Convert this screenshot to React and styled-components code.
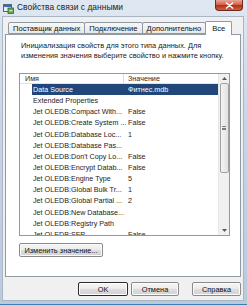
import React from "react";
import styled, { createGlobalStyle } from "styled-components";

const GlobalStyle = createGlobalStyle`
  html, body {
    margin: 0;
    padding: 0;
    background: #ffffff;
  }
  body {
    font-family: "Liberation Sans", Arial, sans-serif;
  }
`;

const Window = styled.div`
  width: 247px;
  height: 305px;
  box-sizing: border-box;
  display: flex;
  flex-direction: column;
  padding: 0 3px 3px 2px;
  background: linear-gradient(180deg, #dfe8f2 0%, #c8d6e6 40%, #b9cadd 100%);
  border-bottom: 1px solid #3b7fb8;
  overflow: hidden;
`;

const TitleBar = styled.div`
  height: 16px;
  display: flex;
  align-items: center;
  flex-shrink: 0;
`;

const TitleIcon = styled.svg`
  width: 11px;
  height: 11px;
  margin-left: 1px;
  margin-right: 3px;
`;

const TitleText = styled.div`
  font-size: 8.4px;
  color: #1a1a1a;
  letter-spacing: 0.05px;
  padding-bottom: 3px;
`;

const CloseButton = styled.div`
  margin-left: auto;
  margin-right: 1px;
  align-self: flex-start;
  width: 28px;
  height: 11px;
  border: 1px solid #6b2a22;
  border-top: none;
  border-radius: 0 0 4px 4px;
  background: linear-gradient(180deg, #e8a797 0%, #d5624b 45%, #b33118 55%, #d1613c 100%);
  display: flex;
  align-items: center;
  justify-content: center;
  box-sizing: border-box;
`;

const Client = styled.div`
  flex: 1;
  background: #f0f0f0;
  border: 1px solid #a9b6c4;
  display: flex;
  flex-direction: column;
  padding: 4px 2px 0 2px;
  box-sizing: border-box;
`;

const TabStrip = styled.div`
  display: flex;
  align-items: flex-end;
  height: 13px;
  padding-left: 3px;
  position: relative;
  z-index: 1;
`;

const Tab = styled.div`
  height: ${(p) => (p.$active ? "14px" : "12px")};
  box-sizing: border-box;
  padding: 0 ${(p) => (p.$active ? "6px" : "4px")};
  margin-bottom: ${(p) => (p.$active ? "-1px" : "0")};
  font-size: 7.6px;
  color: #111;
  display: flex;
  align-items: center;
  border: 1px solid #8e9aa6;
  border-bottom: ${(p) => (p.$active ? "none" : "1px solid #8e9aa6")};
  margin-right: -1px;
  background: ${(p) =>
    p.$active ? "#ffffff" : "linear-gradient(180deg, #f7f7f7 0%, #e8e8e8 100%)"};
  border-radius: 2px 2px 0 0;
  white-space: nowrap;
`;

const Panel = styled.div`
  width: 236px;
  height: 243px;
  box-sizing: border-box;
  background: #ffffff;
  border: 1px solid #8e9aa6;
  display: flex;
  flex-direction: column;
  padding: 6px 10px 0 13px;
`;

const Description = styled.div`
  font-size: 7.4px;
  line-height: 10px;
  color: #1a1a1a;
  padding-left: 2px;
  height: 32px;
`;

const ListView = styled.div`
  width: 211px;
  height: 163px;
  box-sizing: border-box;
  border: 1px solid #8e9aa6;
  display: flex;
  overflow: hidden;
`;

const ListBody = styled.div`
  flex: 1;
  display: flex;
  flex-direction: column;
  overflow: hidden;
`;

const Header = styled.div`
  height: 9px;
  flex-shrink: 0;
  display: flex;
  align-items: center;
  border-bottom: 1px solid #e2e2e2;
  font-size: 7.2px;
  color: #2a2a2a;
`;

const HeaderCell = styled.div`
  width: ${(p) => p.$w}px;
  box-sizing: border-box;
  padding-left: ${(p) => p.$pad}px;
  border-right: ${(p) => (p.$divider ? "1px solid #dcdcdc" : "none")};
  height: 100%;
  display: flex;
  align-items: center;
`;

const Row = styled.div`
  height: 11.15px;
  flex-shrink: 0;
  display: flex;
  align-items: center;
  margin-left: 12px;
  font-size: 7.2px;
  white-space: nowrap;
  color: ${(p) => (p.$selected ? "#ffffff" : "#1c1c1c")};
  background: ${(p) => (p.$selected ? "#21477a" : "transparent")};
`;

const NameCell = styled.div`
  width: 95px;
  padding-left: 1px;
  overflow: hidden;
`;

const ValueCell = styled.div`
  flex: 1;
`;

const ScrollBar = styled.div`
  width: 11px;
  flex-shrink: 0;
  background: #f1f1f1;
  border-left: 1px solid #e6e6e6;
  display: flex;
  flex-direction: column;
  align-items: center;
  box-sizing: border-box;
`;

const Arrow = styled.div`
  height: 9px;
  width: 100%;
  display: flex;
  align-items: center;
  justify-content: center;
  flex-shrink: 0;
`;

const Thumb = styled.div`
  width: 9px;
  height: 90px;
  box-sizing: border-box;
  border: 1px solid #a2a2a2;
  border-radius: 2px;
  background: linear-gradient(90deg, #f3f3f3 0%, #e2e2e2 100%);
  display: flex;
  align-items: center;
  justify-content: center;
`;

const Grip = styled.div`
  width: 4px;
  height: 4px;
  border-top: 1px solid #7d7d7d;
  border-bottom: 1px solid #7d7d7d;
  box-sizing: border-box;
  position: relative;
  &::after {
    content: "";
    position: absolute;
    left: 0;
    right: 0;
    top: 0.5px;
    border-top: 1px solid #7d7d7d;
  }
`;

const Track = styled.div`
  flex: 1;
  display: flex;
  flex-direction: column;
  align-items: center;
`;

const Button = styled.div`
  height: 14px;
  width: ${(p) => p.$w}px;
  box-sizing: border-box;
  border: 1px solid ${(p) => (p.$default ? "#2c2c2c" : "#8a8a8a")};
  border-radius: 2px;
  background: linear-gradient(180deg, #f6f6f6 0%, #ececec 45%, #dcdcdc 55%, #d2d2d2 100%);
  box-shadow: ${(p) => (p.$default ? "inset 0 0 0 1px #ffffff" : "inset 0 0 0 1px #fbfbfb")};
  font-size: 7.4px;
  color: #111;
  display: flex;
  align-items: center;
  justify-content: center;
  white-space: nowrap;
`;

const EditRow = styled.div`
  margin-top: 7px;
  display: flex;
`;

const ButtonRow = styled.div`
  display: flex;
  justify-content: flex-end;
  gap: 3px;
  padding: 5px 0 0 0;
`;

const Spacer = styled.div`
  width: 7px;
`;

const rows = [
  ["Data Source", "Фитнес.mdb"],
  ["Extended Properties", ""],
  ["Jet OLEDB:Compact With...", "False"],
  ["Jet OLEDB:Create System ...", "False"],
  ["Jet OLEDB:Database Loc...", "1"],
  ["Jet OLEDB:Database Pas...", ""],
  ["Jet OLEDB:Don't Copy Lo...", "False"],
  ["Jet OLEDB:Encrypt Datab...", "False"],
  ["Jet OLEDB:Engine Type", "5"],
  ["Jet OLEDB:Global Bulk Tr...", "1"],
  ["Jet OLEDB:Global Partial ...", "2"],
  ["Jet OLEDB:New Database...", ""],
  ["Jet OLEDB:Registry Path", ""],
  ["Jet OLEDB:SFP", "False"],
];

const tabs = ["Поставщик данных", "Подключение", "Дополнительно", "Все"];

export default function App() {
  return (
    <>
      <GlobalStyle />
      <Window>
        <TitleBar>
          <TitleIcon viewBox="0 0 11 11">
            <rect x="0.5" y="1.5" width="8" height="7" fill="#e9eef4" stroke="#55657a" />
            <rect x="1" y="2" width="7" height="2" fill="#3d6fb0" />
            <rect x="5" y="5" width="5.5" height="5.5" fill="#6aa84f" stroke="#2f6b2a" strokeWidth="0.8" />
            <path d="M6.3 7.7h3" stroke="#ffffff" strokeWidth="0.9" />
          </TitleIcon>
          <TitleText>Свойства связи с данными</TitleText>
          <CloseButton>
            <svg width="9" height="7" viewBox="0 0 9 7">
              <path d="M1.5 1l6 5M7.5 1l-6 5" stroke="#ffffff" strokeWidth="1.6" strokeLinecap="round" />
            </svg>
          </CloseButton>
        </TitleBar>
        <Client>
          <TabStrip>
            {tabs.map((t, i) => (
              <Tab key={t} $active={i === 3}>
                {t}
              </Tab>
            ))}
          </TabStrip>
          <Panel>
            <Description>
              Инициализация свойств для этого типа данных. Для изменения значения выберите свойство и нажмите кнопку.
            </Description>
            <ListView>
              <ListBody>
                <Header>
                  <HeaderCell $w={104} $pad={5} $divider>
                    Имя
                  </HeaderCell>
                  <HeaderCell $w={90} $pad={4}>
                    Значение
                  </HeaderCell>
                </Header>
                {rows.map(([name, value], i) => (
                  <Row key={name} $selected={i === 0}>
                    <NameCell>{name}</NameCell>
                    <ValueCell>{value}</ValueCell>
                  </Row>
                ))}
              </ListBody>
              <ScrollBar>
                <Arrow>
                  <svg width="5" height="3" viewBox="0 0 5 3">
                    <path d="M0 3L2.5 0L5 3Z" fill="#5a5a5a" />
                  </svg>
                </Arrow>
                <Track>
                  <Thumb>
                    <Grip />
                  </Thumb>
                </Track>
                <Arrow>
                  <svg width="5" height="3" viewBox="0 0 5 3">
                    <path d="M0 0L2.5 3L5 0Z" fill="#5a5a5a" />
                  </svg>
                </Arrow>
              </ScrollBar>
            </ListView>
            <EditRow>
              <Button $w={84}>Изменить значение...</Button>
            </EditRow>
          </Panel>
          <ButtonRow>
            <Button $w={50} $default>
              OK
            </Button>
            <Button $w={48}>Отмена</Button>
            <Spacer />
            <Button $w={49}>Справка</Button>
          </ButtonRow>
        </Client>
      </Window>
    </>
  );
}
